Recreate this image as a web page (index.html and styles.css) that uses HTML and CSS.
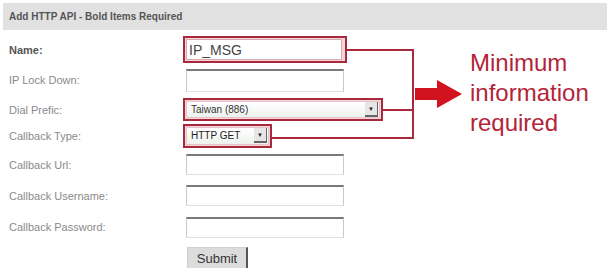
FILE: index.html
```html
<!DOCTYPE html>
<html>
<head>
<meta charset="utf-8">
<link rel="stylesheet" href="styles.css">
</head>
<body>
<div class="page">
  <div class="header">Add HTTP API - Bold Items Required</div>
  <div class="main">
    <form class="form">
      <label class="lbl req">Name:</label>
      <div class="ctl"><span class="hl hl-name"><input class="inp inp-hl" type="text" value="IP_MSG"></span></div>

      <label class="lbl">IP Lock Down:</label>
      <div class="ctl"><input class="inp inp-lock" type="text"></div>

      <label class="lbl">Dial Prefic:</label>
      <div class="ctl"><span class="hl hl-dial"><span class="sel sel-dial"><span class="sel-text">Taiwan (886)</span><span class="sel-btn">&#9660;</span></span></span></div>

      <label class="lbl">Callback Type:</label>
      <div class="ctl"><span class="hl hl-type"><span class="sel sel-type"><span class="sel-text">HTTP GET</span><span class="sel-btn">&#9660;</span></span></span></div>

      <label class="lbl">Callback Url:</label>
      <div class="ctl"><input class="inp" type="text"></div>

      <label class="lbl">Callback Username:</label>
      <div class="ctl"><input class="inp" type="text"></div>

      <label class="lbl">Callback Password:</label>
      <div class="ctl"><input class="inp" type="password"></div>

      <span class="lbl"></span>
      <div class="ctl"><button class="btn" type="button">Submit</button></div>
    </form>
    <div class="note">Minimum<br>information<br>required</div>
  </div>
  <svg class="callout" width="607" height="268" viewBox="0 0 607 268">
    <g stroke="#a8283c" stroke-width="2" fill="none">
      <path d="M347 50 H413 V138 H272"/>
      <path d="M383 110 H413"/>
    </g>
    <path d="M415 88 H437 V80 L462 94 L437 108 V100 H415 Z" fill="#d3121f"/>
  </svg>
</div>
</body>
</html>
```
FILE: styles.css
```css
html, body {
  margin: 0;
  padding: 0;
  background: #fff;
}
.page {
  position: relative;
  width: 607px;
  height: 268px;
  overflow: hidden;
  font-family: "Liberation Sans", Arial, sans-serif;
}
.header {
  margin: 3px 0 0 3px;
  height: 27px;
  line-height: 27px;
  padding-left: 6px;
  background: #e1e1e1;
  color: #555;
  font-size: 10px;
  font-weight: bold;
}
.main {
  display: flex;
}
.form {
  display: grid;
  grid-template-columns: 174px 1fr;
  grid-template-rows: 29px 32px 27px 25px 33px 29px 34px 26px;
  width: 461px;
  margin: 5px 0 0 9px;
}
.lbl {
  display: flex;
  align-items: center;
  font-size: 11px;
  color: #8a8a8a;
}
.lbl.req {
  font-weight: bold;
  color: #555;
}
.ctl {
  display: flex;
  align-items: center;
}
.inp {
  box-sizing: border-box;
  width: 158px;
  height: 21px;
  margin: 0 0 0 3px;
  padding: 0 2px;
  border: 1px solid #c9c9c9;
  border-top: 2px solid #7a7a7a;
  border-bottom-color: #e0e0e0;
  background: #fff;
  font-family: "Liberation Sans", Arial, sans-serif;
  font-size: 13px;
  color: #444;
  outline: none;
}
.inp-lock {
  height: 23px;
}
.hl {
  box-sizing: border-box;
  display: flex;
  align-items: center;
  border: 2px solid #a8283c;
  background: #f2d6da;
  padding: 1px;
}
.hl-name {
  width: 164px;
  height: 27px;
}
.hl .inp-hl {
  margin: 0;
  width: 156px;
  height: 21px;
  border: 1px solid #d9a9b0;
  font-size: 14px;
  padding-left: 2px;
}
.hl-dial {
  width: 200px;
  height: 23px;
}
.hl-type {
  width: 89px;
  height: 24px;
}
.sel {
  box-sizing: border-box;
  display: flex;
  align-items: center;
  justify-content: space-between;
  width: 100%;
  height: 100%;
  padding: 0 1px 0 4px;
  background: linear-gradient(#ffffff, #eef2ee);
  border: 1px solid #e6c4c8;
  font-size: 10px;
  color: #333;
}
.sel-type .sel-text {
  font-size: 10px;
  color: #222;
}
.sel-btn {
  box-sizing: border-box;
  display: flex;
  align-items: center;
  justify-content: center;
  width: 13px;
  height: 15px;
  background: #e6e6e6;
  border-right: 1px solid #666;
  border-bottom: 2px solid #666;
  font-size: 6px;
  color: #222;
}
.btn {
  box-sizing: border-box;
  width: 61px;
  height: 23px;
  margin: 2px 0 0 4px;
  padding: 0;
  background: #dcdcdc;
  border: 1px solid #d0d0d0;
  border-right: 2px solid #555;
  border-bottom: none;
  font-family: "Liberation Sans", Arial, sans-serif;
  font-size: 13px;
  color: #333;
}
.note {
  padding-top: 18px;
  font-size: 24px;
  line-height: 30px;
  color: #b3243a;
}
.callout {
  position: absolute;
  left: 0;
  top: 0;
  pointer-events: none;
}
```
